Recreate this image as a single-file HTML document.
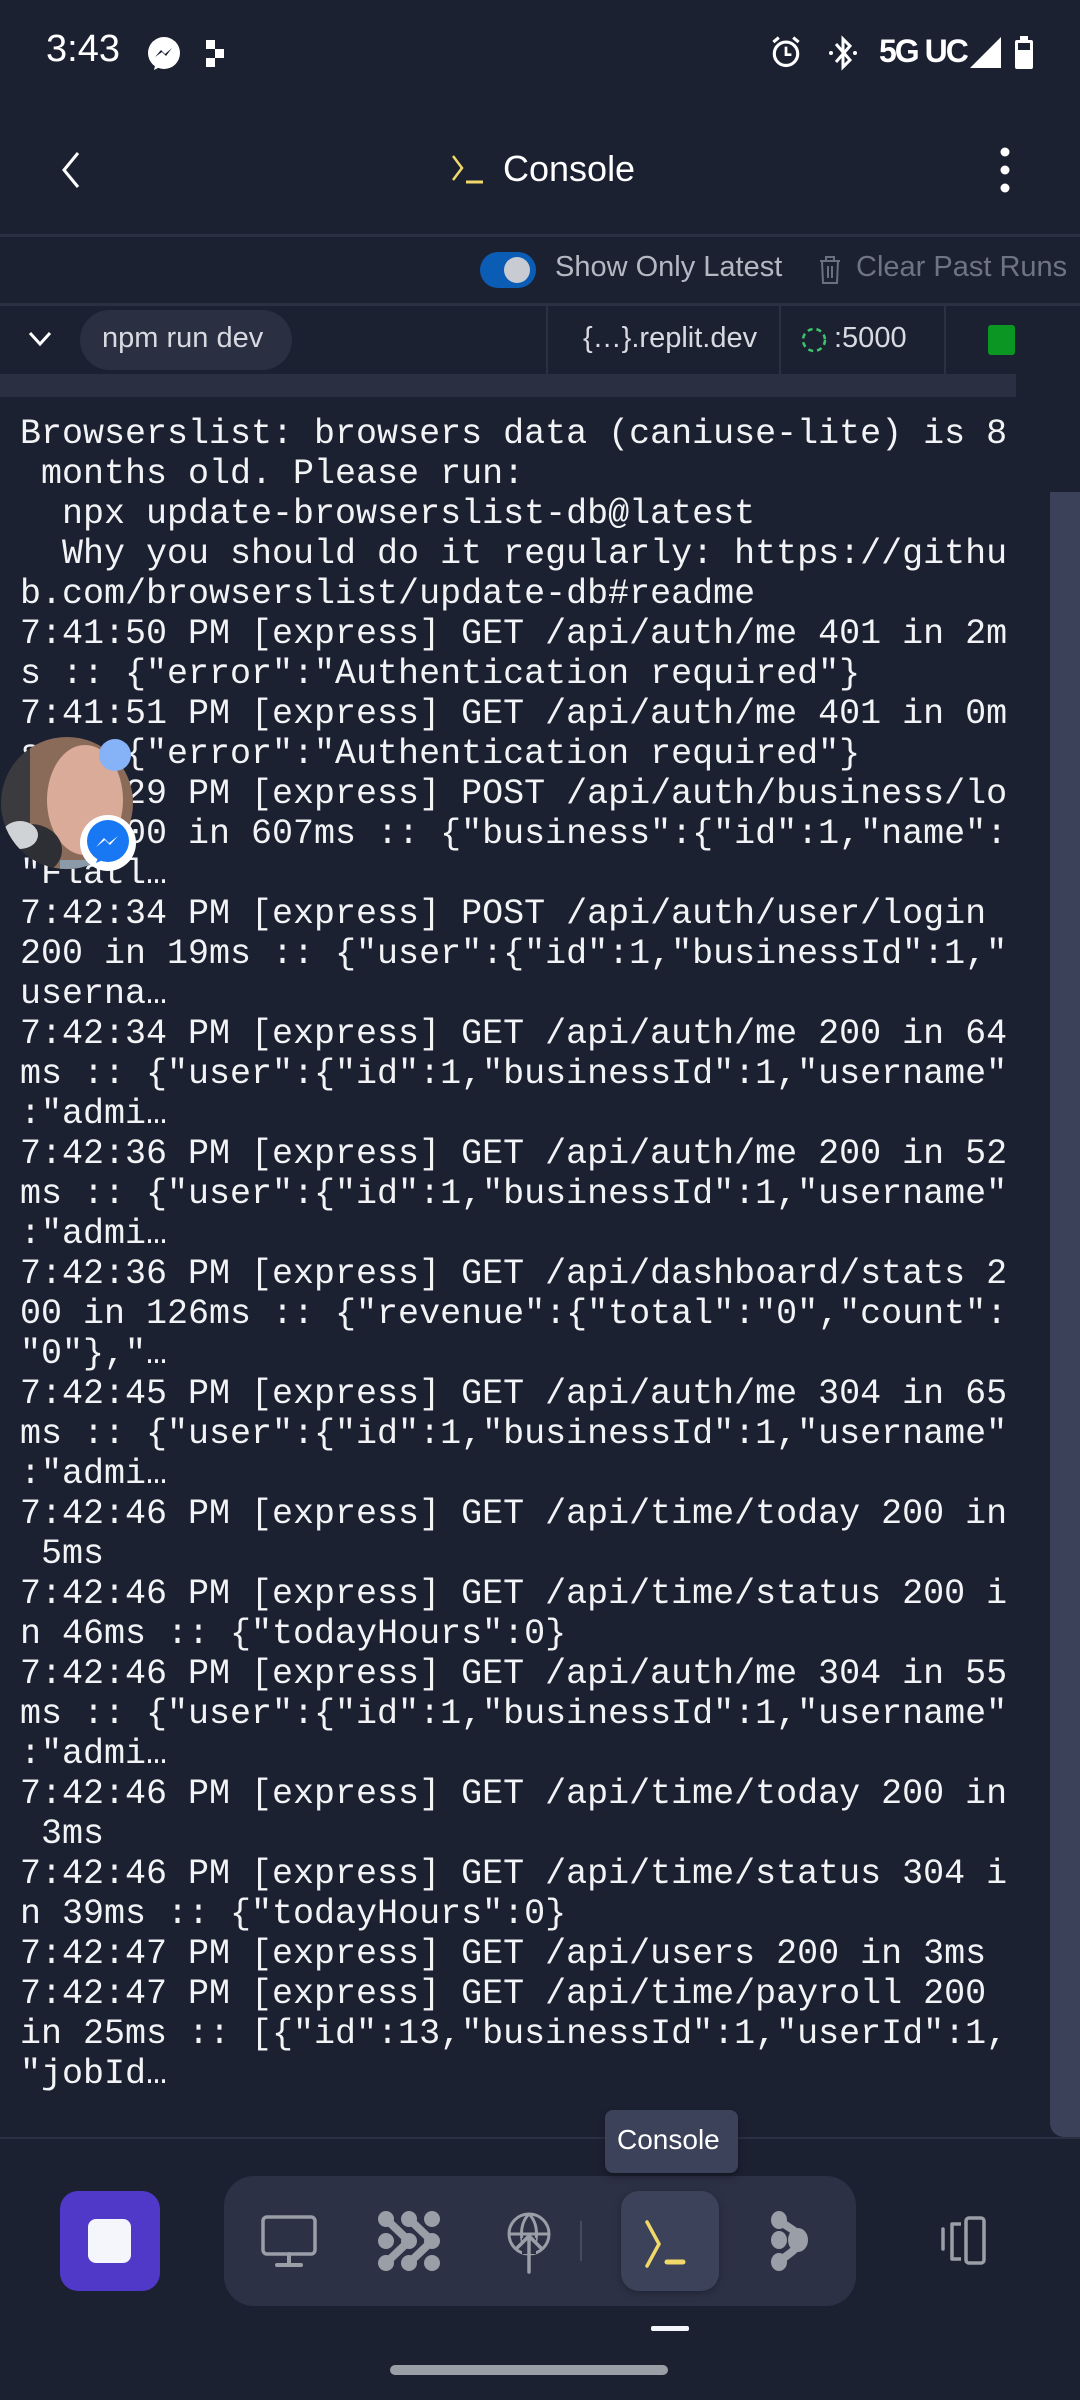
<!DOCTYPE html>
<html><head><meta charset="utf-8">
<style>
*{margin:0;padding:0;box-sizing:border-box}
html,body{width:1080px;height:2400px;background:#1c2132;overflow:hidden}
body{position:relative;font-family:"Liberation Sans Narrow","Liberation Sans",sans-serif;color:#e8e9ee}
.abs{position:absolute}
.log{position:absolute;left:20px;top:414px;font-family:"Liberation Mono",monospace;font-size:35px;color:#f2f3f5}
.log div{height:40px;line-height:40px;white-space:pre}
</style></head><body>
<!-- status bar -->
<div class="abs" style="left:46px;top:28px;font-size:38px;color:#fff;font-family:'Liberation Sans',sans-serif">3:43</div>
<svg class="abs" style="left:146px;top:36px" width="36" height="36" viewBox="0 0 36 36"><circle cx="18" cy="17" r="16" fill="#fff"/><path d="M8 34l2-8 6 4z" fill="#fff"/><path d="M9 21l6-7 4 4 7-6-6 8-4-4z" fill="#1c2132"/></svg>
<svg class="abs" style="left:206px;top:40px" width="26" height="28"><rect x="0" y="0" width="9" height="9" fill="#fff"/><rect x="9" y="9" width="9" height="9" fill="#fff"/><rect x="0" y="18" width="9" height="9" fill="#fff"/></svg>
<svg class="abs" style="left:768px;top:34px" width="36" height="36" viewBox="0 0 40 38"><circle cx="20" cy="21" r="13" fill="none" stroke="#fff" stroke-width="3.5"/><path d="M20 13v9h6" fill="none" stroke="#fff" stroke-width="3"/><path d="M6 8l6-5M34 8l-6-5" stroke="#fff" stroke-width="3.5"/></svg>
<svg class="abs" style="left:828px;top:34px" width="30" height="38" viewBox="0 0 30 38"><path d="M8 10l14 16-7 7V5l7 7-14 16" fill="none" stroke="#fff" stroke-width="3"/><circle cx="3" cy="19" r="2" fill="#fff"/><circle cx="27" cy="19" r="2" fill="#fff"/></svg>
<div class="abs" style="left:879px;top:33px;font-size:32px;line-height:36px;color:#fff;font-family:'Liberation Sans',sans-serif;font-weight:bold;letter-spacing:-2px">5G UC</div>
<svg class="abs" style="left:970px;top:37px" width="31" height="31"><path d="M0 31L31 0V31z" fill="#fff"/></svg>
<svg class="abs" style="left:1014px;top:36px" width="20" height="33"><rect x="6" y="0" width="8" height="4" fill="#fff"/><rect x="1" y="4" width="18" height="29" rx="2" fill="#fff"/><rect x="4" y="7" width="12" height="7" fill="#1c2132"/></svg>
<!-- header -->
<svg class="abs" style="left:56px;top:150px" width="30" height="40"><path d="M22 3L8 20l14 17" fill="none" stroke="#fff" stroke-width="3"/></svg>
<svg class="abs" style="left:450px;top:152px" width="36" height="34"><path d="M3 4l9 12-9 12" fill="none" stroke="#f0d96a" stroke-width="2.5"/><path d="M16 30h17" stroke="#f0d96a" stroke-width="3"/></svg>
<div class="abs" style="left:503px;top:148px;font-size:36px;color:#fff">Console</div>
<svg class="abs" style="left:995px;top:146px" width="20" height="50"><circle cx="10" cy="6" r="4.5" fill="#fff"/><circle cx="10" cy="24" r="4.5" fill="#fff"/><circle cx="10" cy="42" r="4.5" fill="#fff"/></svg>
<div class="abs" style="left:0;top:234px;width:1080px;height:3px;background:#2b3042"></div>
<!-- toggle row -->
<div class="abs" style="left:480px;top:252px;width:56px;height:36px;border-radius:18px;background:#0b5cb4"></div>
<div class="abs" style="left:504px;top:257px;width:26px;height:26px;border-radius:13px;background:#c8cbd2"></div>
<div class="abs" style="left:555px;top:251px;font-size:29px;color:#b4b8c2">Show Only Latest</div>
<svg class="abs" style="left:818px;top:255px" width="24" height="30"><path d="M2 6h20M8 6V2h8v4M4 6l1 22h14l1-22M10 11v12M14 11v12" fill="none" stroke="#6b7080" stroke-width="2"/></svg>
<div class="abs" style="left:856px;top:251px;font-size:29px;color:#6f7484">Clear Past Runs</div>
<div class="abs" style="left:0;top:303px;width:1080px;height:3px;background:#2b3042"></div>
<!-- tab row -->
<svg class="abs" style="left:28px;top:330px" width="24" height="18"><path d="M2 3l10 11 10-11" fill="none" stroke="#fff" stroke-width="3"/></svg>
<div class="abs" style="left:80px;top:310px;width:212px;height:60px;border-radius:30px;background:#2a2f42"></div>
<div class="abs" style="left:102px;top:322px;font-size:29px;color:#d8dae0">npm run dev</div>
<div class="abs" style="left:546px;top:306px;width:2px;height:68px;background:#2b3042"></div>
<div class="abs" style="left:779px;top:306px;width:2px;height:68px;background:#2b3042"></div>
<div class="abs" style="left:944px;top:306px;width:2px;height:68px;background:#2b3042"></div>
<div class="abs" style="left:583px;top:322px;font-size:29px;color:#d8dae0">{…}.replit.dev</div>
<svg class="abs" style="left:800px;top:326px" width="28" height="28"><circle cx="14" cy="14" r="11" fill="none" stroke="#3ec56c" stroke-width="2.5" stroke-dasharray="5 4"/></svg>
<div class="abs" style="left:834px;top:322px;font-size:29px;color:#d8dae0">:5000</div>
<div class="abs" style="left:988px;top:325px;width:27px;height:30px;border-radius:3px;background:#0b9522"></div>
<div class="abs" style="left:0;top:374px;width:1016px;height:23px;background:#2a2f42"></div>
<!-- scrollbar -->
<div class="abs" style="left:1050px;top:492px;width:30px;height:1645px;background:#3b4158;border-radius:0 0 0 14px"></div>
<!-- log -->
<div class="log"><div>Browserslist: browsers data (caniuse-lite) is 8</div><div> months old. Please run:</div><div>  npx update-browserslist-db@latest</div><div>  Why you should do it regularly: https://githu</div><div>b.com/browserslist/update-db#readme</div><div>7:41:50 PM [express] GET /api/auth/me 401 in 2m</div><div>s :: {"error":"Authentication required"}</div><div>7:41:51 PM [express] GET /api/auth/me 401 in 0m</div><div>s :: {"error":"Authentication required"}</div><div>7:42:29 PM [express] POST /api/auth/business/lo</div><div>gin 200 in 607ms :: {"business":{"id":1,"name":</div><div>"Flatl…</div><div>7:42:34 PM [express] POST /api/auth/user/login</div><div>200 in 19ms :: {"user":{"id":1,"businessId":1,"</div><div>userna…</div><div>7:42:34 PM [express] GET /api/auth/me 200 in 64</div><div>ms :: {"user":{"id":1,"businessId":1,"username"</div><div>:"admi…</div><div>7:42:36 PM [express] GET /api/auth/me 200 in 52</div><div>ms :: {"user":{"id":1,"businessId":1,"username"</div><div>:"admi…</div><div>7:42:36 PM [express] GET /api/dashboard/stats 2</div><div>00 in 126ms :: {"revenue":{"total":"0","count":</div><div>"0"},"…</div><div>7:42:45 PM [express] GET /api/auth/me 304 in 65</div><div>ms :: {"user":{"id":1,"businessId":1,"username"</div><div>:"admi…</div><div>7:42:46 PM [express] GET /api/time/today 200 in</div><div> 5ms</div><div>7:42:46 PM [express] GET /api/time/status 200 i</div><div>n 46ms :: {"todayHours":0}</div><div>7:42:46 PM [express] GET /api/auth/me 304 in 55</div><div>ms :: {"user":{"id":1,"businessId":1,"username"</div><div>:"admi…</div><div>7:42:46 PM [express] GET /api/time/today 200 in</div><div> 3ms</div><div>7:42:46 PM [express] GET /api/time/status 304 i</div><div>n 39ms :: {"todayHours":0}</div><div>7:42:47 PM [express] GET /api/users 200 in 3ms</div><div>7:42:47 PM [express] GET /api/time/payroll 200</div><div>in 25ms :: [{"id":13,"businessId":1,"userId":1,</div><div>"jobId…</div></div>
<!-- chat head -->
<svg class="abs" style="left:0;top:735px" width="150" height="150" viewBox="0 0 150 150">
<defs><clipPath id="c"><circle cx="67" cy="68" r="66"/></clipPath></defs>
<g clip-path="url(#c)">
<rect width="150" height="150" fill="#3b3a3e"/>
<rect x="30" y="0" width="110" height="150" fill="#8a6a58"/>
<ellipse cx="85" cy="65" rx="38" ry="55" fill="#d9ab98"/>
<ellipse cx="30" cy="115" rx="32" ry="26" fill="#2e2e35"/>
<ellipse cx="20" cy="100" rx="18" ry="14" fill="#d0d3d6"/>
<rect x="60" y="125" width="80" height="30" fill="#8b9aa8"/>
</g>
<circle cx="115" cy="20" r="16" fill="#86b2f7"/>
<circle cx="108" cy="108" r="28" fill="#fff"/>
<circle cx="108" cy="106" r="21" fill="#1877f2"/>
<path d="M96 128l3-8 6 4z" fill="#1877f2"/>
<path d="M96 112l8-9 5 5 9-7-8 9-5-5z" fill="#fff"/>
</svg>
<!-- bottom -->
<div class="abs" style="left:0;top:2137px;width:1080px;height:2px;background:#2b3042"></div>
<div class="abs" style="left:0;top:2139px;width:1080px;height:261px;background:#1c2132"></div>
<div class="abs" style="left:224px;top:2176px;width:632px;height:130px;border-radius:30px;background:#2c3145"></div>
<div class="abs" style="left:605px;top:2110px;width:133px;height:63px;border-radius:8px;background:#3c4259;box-shadow:0 4px 8px rgba(0,0,0,.3)"></div>
<div class="abs" style="left:617px;top:2124px;font-size:28px;color:#fff">Console</div>
<div class="abs" style="left:60px;top:2191px;width:100px;height:100px;border-radius:18px;background:#5038c9"></div>
<div class="abs" style="left:88px;top:2219px;width:43px;height:44px;border-radius:8px;background:#f4f6fb"></div>
<svg class="abs" style="left:260px;top:2214px" width="58" height="56"><rect x="3" y="3" width="52" height="37" rx="4" fill="none" stroke="#9a9ea6" stroke-width="3.5"/><path d="M29 40v9M17 51h24" stroke="#9a9ea6" stroke-width="4" stroke-linecap="round"/></svg>
<svg class="abs" style="left:374px;top:2209px" width="70" height="64" viewBox="0 0 70 64" fill="#9a9ea6"><circle cx="12" cy="10" r="8"/><circle cx="35" cy="10" r="8"/><circle cx="58" cy="10" r="8"/><circle cx="12" cy="32" r="8"/><circle cx="35" cy="32" r="8"/><circle cx="58" cy="32" r="8"/><circle cx="12" cy="54" r="8"/><circle cx="35" cy="54" r="8"/><circle cx="58" cy="54" r="8"/><path d="M12 10L35 32 12 54M35 10L58 32 35 54" fill="none" stroke="#9a9ea6" stroke-width="8"/></svg>
<svg class="abs" style="left:504px;top:2210px" width="50" height="64"><circle cx="25" cy="24" r="20" fill="none" stroke="#9a9ea6" stroke-width="3"/><path d="M5 24h40M25 4c-10 10-10 30 0 40M25 4c10 10 10 30 0 40" fill="none" stroke="#9a9ea6" stroke-width="3"/><rect x="18" y="28" width="14" height="16" fill="#2c3145"/><path d="M25 62V26M13 38l12-12 12 12" fill="none" stroke="#9a9ea6" stroke-width="3.5" stroke-linecap="round"/></svg>
<div class="abs" style="left:580px;top:2221px;width:2px;height:40px;background:#454b60"></div>
<div class="abs" style="left:621px;top:2191px;width:98px;height:100px;border-radius:18px;background:#3c4259;box-shadow:0 2px 8px rgba(0,0,0,.25)"></div>
<svg class="abs" style="left:640px;top:2218px" width="60" height="50"><path d="M7 4l12 22-12 22" fill="none" stroke="#f0d96a" stroke-width="3.5" stroke-linecap="round"/><path d="M27 44h16" stroke="#f0d96a" stroke-width="5" stroke-linecap="round"/></svg>
<svg class="abs" style="left:770px;top:2210px" width="40" height="64" viewBox="0 0 40 64" fill="#9a9ea6"><ellipse cx="9" cy="10" rx="8" ry="9"/><ellipse cx="9" cy="30" rx="8" ry="9"/><ellipse cx="9" cy="52" rx="8" ry="9"/><path d="M9 10c8 8 20 10 20 20s-12 14-20 22" fill="none" stroke="#9a9ea6" stroke-width="8"/><ellipse cx="28" cy="30" rx="10" ry="12"/></svg>
<svg class="abs" style="left:940px;top:2216px" width="46" height="54"><path d="M3 13v20" stroke="#9a9ea6" stroke-width="3.5" stroke-linecap="round"/><path d="M21 8h-9v35h9" fill="none" stroke="#9a9ea6" stroke-width="3.5" stroke-linejoin="round"/><rect x="26" y="2" width="18" height="45" rx="3" fill="none" stroke="#9a9ea6" stroke-width="3.5"/></svg>
<div class="abs" style="left:651px;top:2326px;width:38px;height:5px;border-radius:2px;background:#f4f6fb"></div>
<div class="abs" style="left:390px;top:2365px;width:278px;height:10px;border-radius:5px;background:#9a9ea6"></div>
</body></html>
